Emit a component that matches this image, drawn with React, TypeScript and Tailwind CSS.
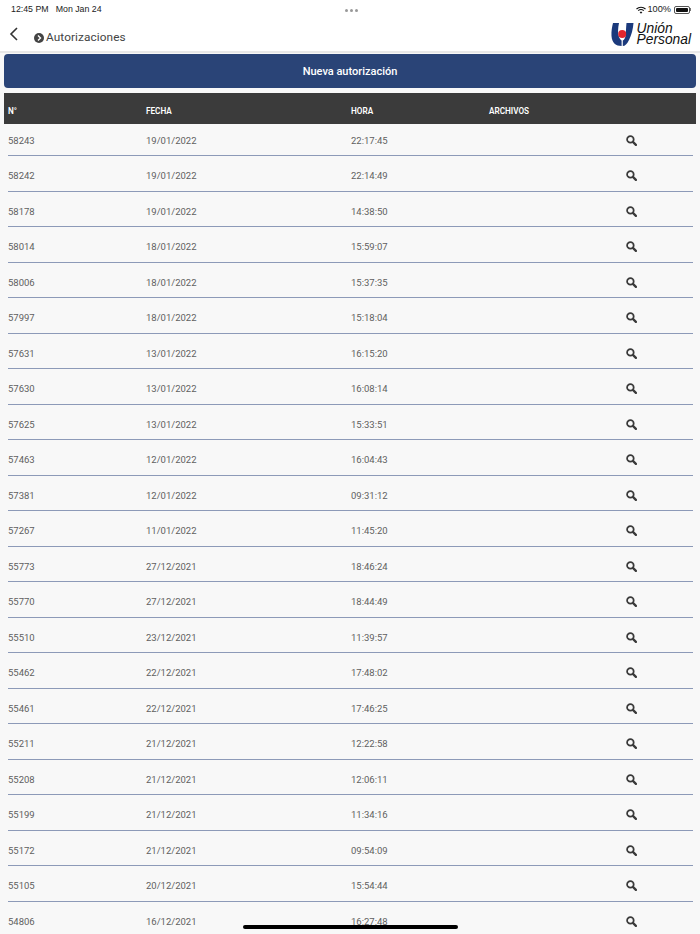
const rows = [
  ['58243', '19/01/2022', '22:17:45'],
  ['58242', '19/01/2022', '22:14:49'],
  ['58178', '19/01/2022', '14:38:50'],
  ['58014', '18/01/2022', '15:59:07'],
  ['58006', '18/01/2022', '15:37:35'],
  ['57997', '18/01/2022', '15:18:04'],
  ['57631', '13/01/2022', '16:15:20'],
  ['57630', '13/01/2022', '16:08:14'],
  ['57625', '13/01/2022', '15:33:51'],
  ['57463', '12/01/2022', '16:04:43'],
  ['57381', '12/01/2022', '09:31:12'],
  ['57267', '11/01/2022', '11:45:20'],
  ['55773', '27/12/2021', '18:46:24'],
  ['55770', '27/12/2021', '18:44:49'],
  ['55510', '23/12/2021', '11:39:57'],
  ['55462', '22/12/2021', '17:48:02'],
  ['55461', '22/12/2021', '17:46:25'],
  ['55211', '21/12/2021', '12:22:58'],
  ['55208', '21/12/2021', '12:06:11'],
  ['55199', '21/12/2021', '11:34:16'],
  ['55172', '21/12/2021', '09:54:09'],
  ['55105', '20/12/2021', '15:54:44'],
  ['54806', '16/12/2021', '16:27:48'],
]

function SearchIcon() {
  return (
    <svg width="11" height="11" viewBox="0 0 12 12" fill="none" stroke="#3a3a3a" strokeLinecap="round" className="mb-px">
      <circle cx="4.800" cy="4.800" r="3.600" strokeWidth="1.900" />
      <path d="M7.800 7.800L10.800 10.800" strokeWidth="2.500" />
    </svg>
  )
}

function Logo() {
  return (
    <svg width="23" height="23" viewBox="0 0 23 23">
      <path d="M2 0H8C7 5 6.500 10 8 14C8.800 16 9.800 17 10.600 17.500V23C5 23 1 20 .5 13C.2 8 1 4 2 0z" fill="#1b3a7c" />
      <path d="M15.500 0H22.500C22 6 20.500 12 18 17C16 21 14 23 11.800 23V17.500C13 17 14 15.500 14.500 13C15 9 15 4 15.500 0z" fill="#1b3a7c" />
      <circle cx="11.200" cy="11" r="4" fill="#e3262e" />
    </svg>
  )
}

export default function App() {
  return (
    <div className="h-[934px] w-[700px] overflow-hidden bg-[#f8f8f8] font-['Liberation_Sans',sans-serif] relative">
      <div className="bg-white h-[53px] border-b-2 border-[#e8e8e8] flex flex-col">
        <div className="h-[17px] flex items-center justify-between pl-[11px] pr-[9px] pt-[3px] text-[8.8px] text-[#222]">
          <div className="flex gap-[7px] flex-1">
            <span>12:45 PM</span>
            <span>Mon Jan 24</span>
          </div>
          <div className="flex gap-[2px]">
            <span className="w-[3px] h-[3px] rounded-full bg-[#999]"></span>
            <span className="w-[3px] h-[3px] rounded-full bg-[#999]"></span>
            <span className="w-[3px] h-[3px] rounded-full bg-[#999]"></span>
          </div>
          <div className="flex flex-1 justify-end items-center gap-[2px]">
            <svg width="10" height="8" viewBox="0 0 10 8" fill="none" stroke="#111" strokeWidth="1.100">
              <path d="M.5 3C3 .6 7 .6 9.500 3" />
              <path d="M2.200 4.700C3.800 3.300 6.200 3.300 7.800 4.700" />
              <path d="M5 7.800L3.700 6.300C4.500 5.700 5.500 5.700 6.300 6.300z" fill="#111" stroke="none" />
            </svg>
            <span className="text-[9.2px]">100%</span>
            <span className="ml-px w-[16px] h-[8px] rounded-[2px] border border-[#555] p-px flex">
              <span className="flex-1 bg-[#111] rounded-[1px]"></span>
            </span>
            <span className="-ml-[2px] w-px h-[3px] bg-[#777]"></span>
          </div>
        </div>
        <div className="flex-1 flex items-center pl-[9px] pr-[9px]">
          <svg width="10" height="14" viewBox="0 0 10 14" fill="none" stroke="#333" strokeWidth="1.600">
            <path d="M8 1L2 7l6 6" />
          </svg>
          <svg width="10" height="10" viewBox="0 0 10 10" className="ml-[15px] mt-[8px]">
            <circle cx="5" cy="5" r="5" fill="#444" />
            <path d="M4 2.500L6.500 5 4 7.500" stroke="#fff" strokeWidth="1.400" fill="none" />
          </svg>
          <span className="ml-[2px] mt-[8px] text-[11.8px] tracking-[0.1px] text-[#444] font-['Roboto',sans-serif]">Autorizaciones</span>
          <div className="ml-auto flex items-center gap-[3px]">
            <Logo />
            <div className="text-[13.8px] leading-[11.5px] italic text-[#111]">
              <div>Unión</div>
              <div>Personal</div>
            </div>
          </div>
        </div>
      </div>

      <div className="px-1 pt-px">
        <div className="h-[34px] rounded-[4px] bg-[#2a4477] flex items-center justify-center pt-[2px] text-white text-[11px] font-medium font-['Roboto',sans-serif]">
          Nueva autorización
        </div>
        <div className="mt-[5px] h-[30.5px] bg-[#3b3b3b] flex items-center pt-[5px] text-white text-[8.2px] font-semibold font-['Roboto',sans-serif]">
          <span className="w-[142px] pl-1">N°</span>
          <span className="w-[205px]">FECHA</span>
          <span className="w-[138px]">HORA</span>
          <span>ARCHIVOS</span>
        </div>
        {rows.map((r, i) => (
          <div
            key={r[0]}
            className={
              i === 0
                ? "h-[32.5px] ml-1 w-[685px] border-b border-[#8d9ab8] flex items-end pb-[8.500px] text-[9.5px] leading-3 text-[#5f5f5f] font-['Roboto',sans-serif]"
                : "h-[35.5px] ml-1 w-[685px] border-b border-[#8d9ab8] flex items-end pb-[8.500px] text-[9.5px] leading-3 text-[#5f5f5f] font-['Roboto',sans-serif]"
            }
          >
            <span className="w-[138px]">{r[0]}</span>
            <span className="w-[205px]">{r[1]}</span>
            <span className="w-[275px]">{r[2]}</span>
            <SearchIcon />
          </div>
        ))}
      </div>

      <div className="absolute left-[243px] top-[925px] w-[215px] h-[4px] rounded-full bg-black"></div>
    </div>
  )
}
